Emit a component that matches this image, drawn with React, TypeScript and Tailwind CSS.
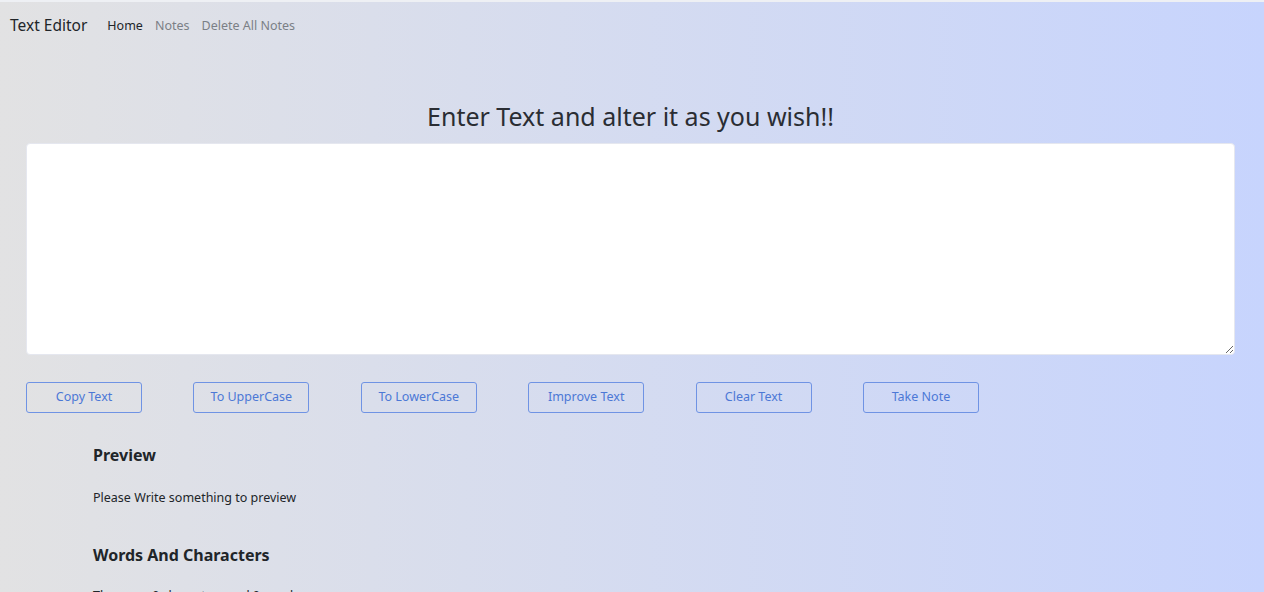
const buttons = ["Copy Text", "To UpperCase", "To LowerCase", "Improve Text", "Clear Text", "Take Note"];

export default function App() {
  return (
    <div
      className="min-h-[592px] w-full bg-gradient-to-r from-[#e2e2e3] to-[#c7d4fd] border-t-2 border-[#eef0f4] text-[#212529]"
      style={{ fontFamily: '"Noto Sans", "Open Sans", sans-serif' }}
    >
      <nav className="flex items-center h-[48px] px-[10px]">
        <span className="text-[15.5px] text-[#212529] mr-[20px]">Text Editor</span>
        <div className="flex gap-[12px] text-[12.5px]">
          <span className="text-[#212529]">Home</span>
          <span className="text-[#7b7f86]">Notes</span>
          <span className="text-[#7b7f86]">Delete All Notes</span>
        </div>
      </nav>

      <div className="pl-[26px] pr-[29px] pt-[48px]">
        <h1 className="text-center text-[25px] leading-[36px] text-[#2a2d33] mb-[9px]">Enter Text and alter it as you wish!!</h1>
        <textarea className="block w-full h-[212px] bg-white rounded-[4px] border border-[#e5e7ef] resize-y outline-none" />

        <div className="flex gap-[51.4px] mt-[27px]">
          {buttons.map((b) => (
            <button
              key={b}
              className="w-[116px] h-[31px] rounded-[3px] border border-[#6f93e4] text-[12.5px] text-[#4c78d6]"
            >
              {b}
            </button>
          ))}
        </div>

        <div className="pl-[67px] pt-[30px]">
          <h2 className="text-[16px] font-bold leading-[24px] text-[#212529]">Preview</h2>
          <p className="text-[12.5px] mt-[22px] text-[#212529]">Please Write something to preview</p>
          <h2 className="text-[16px] font-bold leading-[24px] mt-[35px] text-[#212529]">Words And Characters</h2>
          <p className="text-[12.5px] mt-[20px] text-[#212529]">There are 0 characters and 0 words</p>
        </div>
      </div>
    </div>
  );
}
